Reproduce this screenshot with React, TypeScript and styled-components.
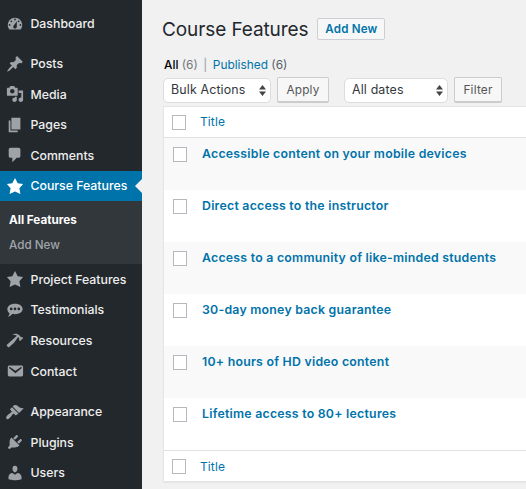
import React from "react";
import styled, { createGlobalStyle } from "styled-components";

const Global = createGlobalStyle`
  html, body { margin: 0; padding: 0; height: 100%; overflow: hidden; background: #f1f1f1; }
  body { font-family: Inter, "Liberation Sans", sans-serif; }
  #root { height: 100%; }
`;
const Page = styled.div`display: flex; width: 526px; height: 489px; overflow: hidden;`;
const Sidebar = styled.nav`width: 142px; flex: none; background: #23282d; padding-top: 8.3px; box-sizing: border-box; overflow: hidden;`;
const Group = styled.div<{ $gap?: number }>`margin-bottom: ${p => p.$gap ?? 9.4}px;`;
const Item = styled.div<{ $active?: boolean }>`
  position: relative; display: flex; align-items: center; height: 30.6px; padding-left: 5.5px; gap: 7px;
  font-size: 12.3px; font-weight: 500; letter-spacing: 0; white-space: nowrap;
  color: ${p => (p.$active ? "#fff" : "#eee")};
  background: ${p => (p.$active ? "#0073aa" : "transparent")};
  svg { fill: ${p => (p.$active ? "#fff" : "#9ea3a8")}; }
`;
const Arrow = styled.span`
  position: absolute; right: 0; top: 50%; margin-top: -7px; width: 0; height: 0;
  border: 7px solid transparent; border-right-color: #f1f1f1; border-left: 0;
`;
const Icon = styled.svg`width: 18px; height: 18px; flex: none;`;
const Sub = styled.div`background: #32373c; height: 62.7px; padding-top: 6.5px; box-sizing: border-box;`;
const SubItem = styled.div<{ $current?: boolean }>`
  height: 25px; display: flex; align-items: center; padding-left: 9px; font-size: 11.7px;
  font-weight: ${p => (p.$current ? 700 : 500)}; color: ${p => (p.$current ? "#fff" : "#a0a5aa")};
`;
const Main = styled.main`flex: 1; min-width: 0; padding: 18px 0 0 21px; box-sizing: border-box; color: #23282d;`;
const Heading = styled.div`display: flex; align-items: center; gap: 9px; height: 22px; margin-left: -1px;`;
const Title = styled.h1`margin: 0; font-size: 19px; font-weight: 400; color: #23282d; white-space: nowrap; letter-spacing: -0.1px;`;
const AddNew = styled.button`
  height: 22px; width: 68px; padding: 0; border: 1px solid #ccd0d4; border-radius: 2px; background: #f7f7f7;
  color: #0073aa; font: 600 11.6px Inter, sans-serif; letter-spacing: .2px;
`;
const Filters = styled.div`display: flex; align-items: center; height: 14px; margin-top: 17px; margin-left: 1px; font-size: 11.9px; color: #72777c; white-space: nowrap;`;
const Strong = styled.span`color: #000; font-weight: 500;`;
const Sep = styled.span`color: #999; margin: 0 5.5px;`;
const Link = styled.span`color: #0073aa;`;
const Count = styled.span`color: #555d66;`;
const Toolbar = styled.div`display: flex; align-items: center; height: 26px; margin-top: 6px;`;
const Select = styled.div<{ $w: number; $mr: number }>`
  position: relative; width: ${p => p.$w}px; margin-right: ${p => p.$mr}px; height: 25px; box-sizing: border-box;
  padding: 0 0 2px 7px; display: flex; align-items: center; background: #fff; border: 1px solid #ddd; border-radius: 5px;
  font-size: 12.4px; color: #32373c; letter-spacing: .15px;
`;
const Updown = styled.svg`position: absolute; right: 4px; top: 6px; width: 7px; height: 11px; fill: #444;`;
const Btn = styled.div<{ $w: number; $mr: number }>`
  width: ${p => p.$w}px; margin-right: ${p => p.$mr}px; height: 26px; box-sizing: border-box; display: flex; align-items: center; justify-content: center;
  background: #f7f7f7; border: 1px solid #ccc; border-bottom-width: 2px; border-radius: 2px; color: #555; font-size: 11.8px; letter-spacing: .2px;
`;
const Table = styled.div`margin-top: 3px; width: 420px; border: 1px solid #e5e5e5; border-right: 0; background: #fff; box-shadow: 0 1px 1px rgba(0,0,0,.04); box-sizing: border-box;`;
const HeadRow = styled.div<{ $foot?: boolean }>`
  display: flex; align-items: center; height: 31px; padding-left: 8px; gap: 14px; box-sizing: border-box;
  ${p => (p.$foot ? "border-top: 1px solid #e1e1e1;" : "border-bottom: 1px solid #e1e1e1;")}
`;
const Box = styled.span`width: 14px; height: 15px; box-sizing: border-box; flex: none; background: #fff; border: 1px solid #b4b9be;`;
const HeadLink = styled.span<{ $up?: boolean }>`font-size: 12px; color: #0073aa; letter-spacing: .1px; margin-top: ${p => (p.$up ? "-2px" : "0")};`;
const Row = styled.div<{ $alt: boolean }>`
  display: flex; align-items: flex-start; height: 52px; padding: 9px 0 0 9px; box-sizing: border-box; gap: 15px;
  background: ${p => (p.$alt ? "#f9f9f9" : "#fff")};
`;
const RowLink = styled.span`font-size: 12.3px; font-weight: 600; color: #0073aa; letter-spacing: .25px; line-height: 14px; white-space: nowrap;`;

const P: Record<string, React.ReactNode> = {
  dash: <path fillRule="evenodd" d="M3.76 16h12.48c1.1-1.37 1.76-3.11 1.76-5 0-4.42-3.58-8-8-8s-8 3.58-8 8c0 1.89.66 3.63 1.76 5zM10 4c.55 0 1 .45 1 1s-.45 1-1 1-1-.45-1-1 .45-1 1-1zM6 6c.55 0 1 .45 1 1s-.45 1-1 1-1-.45-1-1 .45-1 1-1zm8 0c.55 0 1 .45 1 1s-.45 1-1 1-1-.45-1-1 .45-1 1-1zm-5.37 5.55L12 7v6c0 1.1-.9 2-2 2s-2-.9-2-2c0-.57.24-1.08.63-1.45zM4 10c.55 0 1 .45 1 1s-.45 1-1 1-1-.45-1-1 .45-1 1-1zm12 0c.55 0 1 .45 1 1s-.45 1-1 1-1-.45-1-1 .45-1 1-1z" />,
  post: <path d="M10.44 3.02l1.82-1.82 6.36 6.35-1.83 1.82c-1.05-.68-2.48-.57-3.41.36l-.75.75c-.92.93-1.04 2.35-.35 3.41l-1.83 1.82-2.41-2.41-2.8 2.79c-.42.42-3.38 2.71-3.8 2.29s1.86-3.39 2.28-3.81l2.79-2.79L4.1 9.36l1.83-1.82c1.05.69 2.48.57 3.4-.36l.75-.75c.93-.92 1.05-2.35.36-3.41z" />,
  media: <path fillRule="evenodd" d="M13 11V4c0-.55-.45-1-1-1h-1.67L9 1H5L3.67 3H2c-.55 0-1 .45-1 1v7c0 .55.45 1 1 1h10c.55 0 1-.45 1-1zM7 4.5c1.38 0 2.5 1.12 2.5 2.5S8.38 9.5 7 9.5 4.5 8.38 4.5 7 5.62 4.5 7 4.5zM14 6h5v10.5c0 1.38-1.12 2.5-2.5 2.5S14 17.88 14 16.5s1.12-2.5 2.5-2.5c.17 0 .34.02.5.05V9h-3V6zm-4 8.05V13h2v3.5c0 1.38-1.12 2.5-2.5 2.5S7 17.88 7 16.5 8.12 14 9.5 14c.17 0 .34.02.5.05z" />,
  pages: <path d="M6 15V2h10v13H6zm-1 1h8v2H3V5h2v11z" />,
  comments: <path d="M5 2h9c1.1 0 2 .9 2 2v7c0 1.1-.9 2-2 2h-2l-5 5v-5H5c-1.1 0-2-.9-2-2V4c0-1.1.9-2 2-2z" />,
  star: <path d="M10 1l3 6 6 .75-4.12 4.62L16 19l-6-3-6 3 1.13-6.63L1 7.75 7 7z" />,
  chat: <path fillRule="evenodd" d="M10 3c4.7 0 8.5 2.5 8.5 5.8s-3.8 5.8-8.5 5.8c-.9 0-1.8-.1-2.6-.3C6.300 15.500 4.500 17 2 17.500c1-1 1.700-2.200 1.900-3.900C2.400 12.500 1.500 10.800 1.500 8.800 1.500 5.500 5.300 3 10 3zM5.800 7.300a1.500 1.500 0 1 0 0 3 1.500 1.500 0 0 0 0-3zm4.200 0a1.500 1.500 0 1 0 0 3 1.500 1.500 0 0 0 0-3zm4.200 0a1.500 1.500 0 1 0 0 3 1.500 1.500 0 0 0 0-3z" />,
  tool: <path d="M17.7 6.320l1.410 1.420-3.470 3.410-1.420-1.420.84-.82c-.32-.76-.81-1.570-1.510-2.310l-4.610 6.590-5.260 4.700c-.39.39-1.020.39-1.420 0l-1.200-1.210c-.39-.39-.39-1.020 0-1.410l10.970-9.920c-1.370-.86-3.210-1.460-5.670-1.480 2.700-.82 4.950-.93 6.580-.3 1.700.66 2.820 2.200 3.910 3.580z" />,
  mail: <path fillRule="evenodd" d="M3.870 4h13.250C18.370 4 19 4.590 19 5.790v8.420c0 1.190-.63 1.790-1.880 1.790H3.870c-1.250 0-1.880-.6-1.880-1.790V5.790c0-1.200.63-1.790 1.880-1.790zm6.620 8.600l6.740-5.530c.24-.2.43-.66.13-1.070-.29-.41-.82-.42-1.170-.17l-5.700 3.860L4.800 5.830c-.35-.25-.88-.24-1.170.17-.3.41-.11.87.13 1.070z" />,
  brush: <path d="M14.480 11.060L7.410 3.990l1.500-1.500c.5-.56 2.300-.47 3.510.32 1.210.8 1.430 1.280 2.910 2.100 1.180.64 2.450 1.260 4.450.85zm-.71.71L6.700 4.700 4.930 6.470c-.39.39-.39 1.020 0 1.410l1.060 1.060c.39.39.39 1.030 0 1.420-.6.6-5.400 3.600-5.800 5.700-.2 1.100.7 2.100 1.800 1.900 2.100-.4 5.100-5.200 5.700-5.800.39-.39 1.030-.39 1.420 0l1.060 1.060c.39.39 1.020.39 1.410 0z" />,
  plug: <path d="M13.110 4.360L9.870 7.600 8 5.730l3.240-3.240c.35-.34 1.050-.2 1.560.32.52.51.66 1.210.31 1.550zm-8 1.770l.91-1.120 9.010 9.010-1.190.84c-.71.71-2.630 1.160-3.820 1.160H6.140L4.900 17.260c-.59.59-1.540.59-2.120 0-.59-.58-.59-1.530 0-2.120l1.240-1.240v-3.880c0-1.130.4-3.190 1.090-3.890zm7.260 3.970l3.240-3.240c.34-.35 1.040-.21 1.550.31.52.51.66 1.210.31 1.550l-3.240 3.250z" />,
  user: <path d="M10 9.250c-2.270 0-2.730-3.440-2.730-3.440C7 4.020 7.820 2 9.970 2c2.160 0 2.980 2.020 2.710 3.810 0 0-.41 3.440-2.680 3.440zm0 2.570L12.720 10c2.390 0 4.520 2.330 4.520 4.530v2.490s-3.650 1.130-7.240 1.130c-3.650 0-7.240-1.130-7.240-1.130v-2.490c0-2.250 1.940-4.480 4.470-4.480z" />,
};

const NavItem = ({ icon, label, active }: { icon: string; label: string; active?: boolean }) => (
  <Item $active={active}>
    <Icon viewBox="0 0 20 20">{P[icon]}</Icon>
    {label}
    {active && <Arrow />}
  </Item>
);

const rows = [
  "Accessible content on your mobile devices",
  "Direct access to the instructor",
  "Access to a community of like-minded students",
  "30-day money back guarantee",
  "10+ hours of HD video content",
  "Lifetime access to 80+ lectures",
];

export default function App() {
  return (
    <Page>
      <Global />
      <Sidebar>
        <Group>
          <NavItem icon="dash" label="Dashboard" />
        </Group>
        <Group $gap={10}>
          <NavItem icon="post" label="Posts" />
          <NavItem icon="media" label="Media" />
          <NavItem icon="pages" label="Pages" />
          <NavItem icon="comments" label="Comments" />
          <NavItem icon="star" label="Course Features" active />
          <Sub>
            <SubItem $current>All Features</SubItem>
            <SubItem>Add New</SubItem>
          </Sub>
          <NavItem icon="star" label="Project Features" />
          <NavItem icon="chat" label="Testimonials" />
          <NavItem icon="tool" label="Resources" />
          <NavItem icon="mail" label="Contact" />
        </Group>
        <Group>
          <NavItem icon="brush" label="Appearance" />
          <NavItem icon="plug" label="Plugins" />
          <NavItem icon="user" label="Users" />
        </Group>
      </Sidebar>
      <Main>
        <Heading>
          <Title>Course Features</Title>
          <AddNew>Add New</AddNew>
        </Heading>
        <Filters>
          <Strong>All</Strong>&nbsp;(6)<Sep>|</Sep><Link>Published</Link>&nbsp;<Count>(6)</Count>
        </Filters>
        <Toolbar>
          <Select $w={108} $mr={6}>
            Bulk Actions
            <Updown viewBox="0 0 7 11"><path d="M3.500 0L7 4.500H0zM3.500 11L0 6.500h7z" /></Updown>
          </Select>
          <Btn $w={52} $mr={15}>Apply</Btn>
          <Select $w={104} $mr={6}>
            All dates
            <Updown viewBox="0 0 7 11"><path d="M3.500 0L7 4.500H0zM3.500 11L0 6.500h7z" /></Updown>
          </Select>
          <Btn $w={48} $mr={0}>Filter</Btn>
        </Toolbar>
        <Table>
          <HeadRow>
            <Box />
            <HeadLink $up>Title</HeadLink>
          </HeadRow>
          {rows.map((r, i) => (
            <Row key={r} $alt={i % 2 === 0}>
              <Box />
              <RowLink>{r}</RowLink>
            </Row>
          ))}
          <HeadRow $foot>
            <Box />
            <HeadLink>Title</HeadLink>
          </HeadRow>
        </Table>
      </Main>
    </Page>
  );
}
